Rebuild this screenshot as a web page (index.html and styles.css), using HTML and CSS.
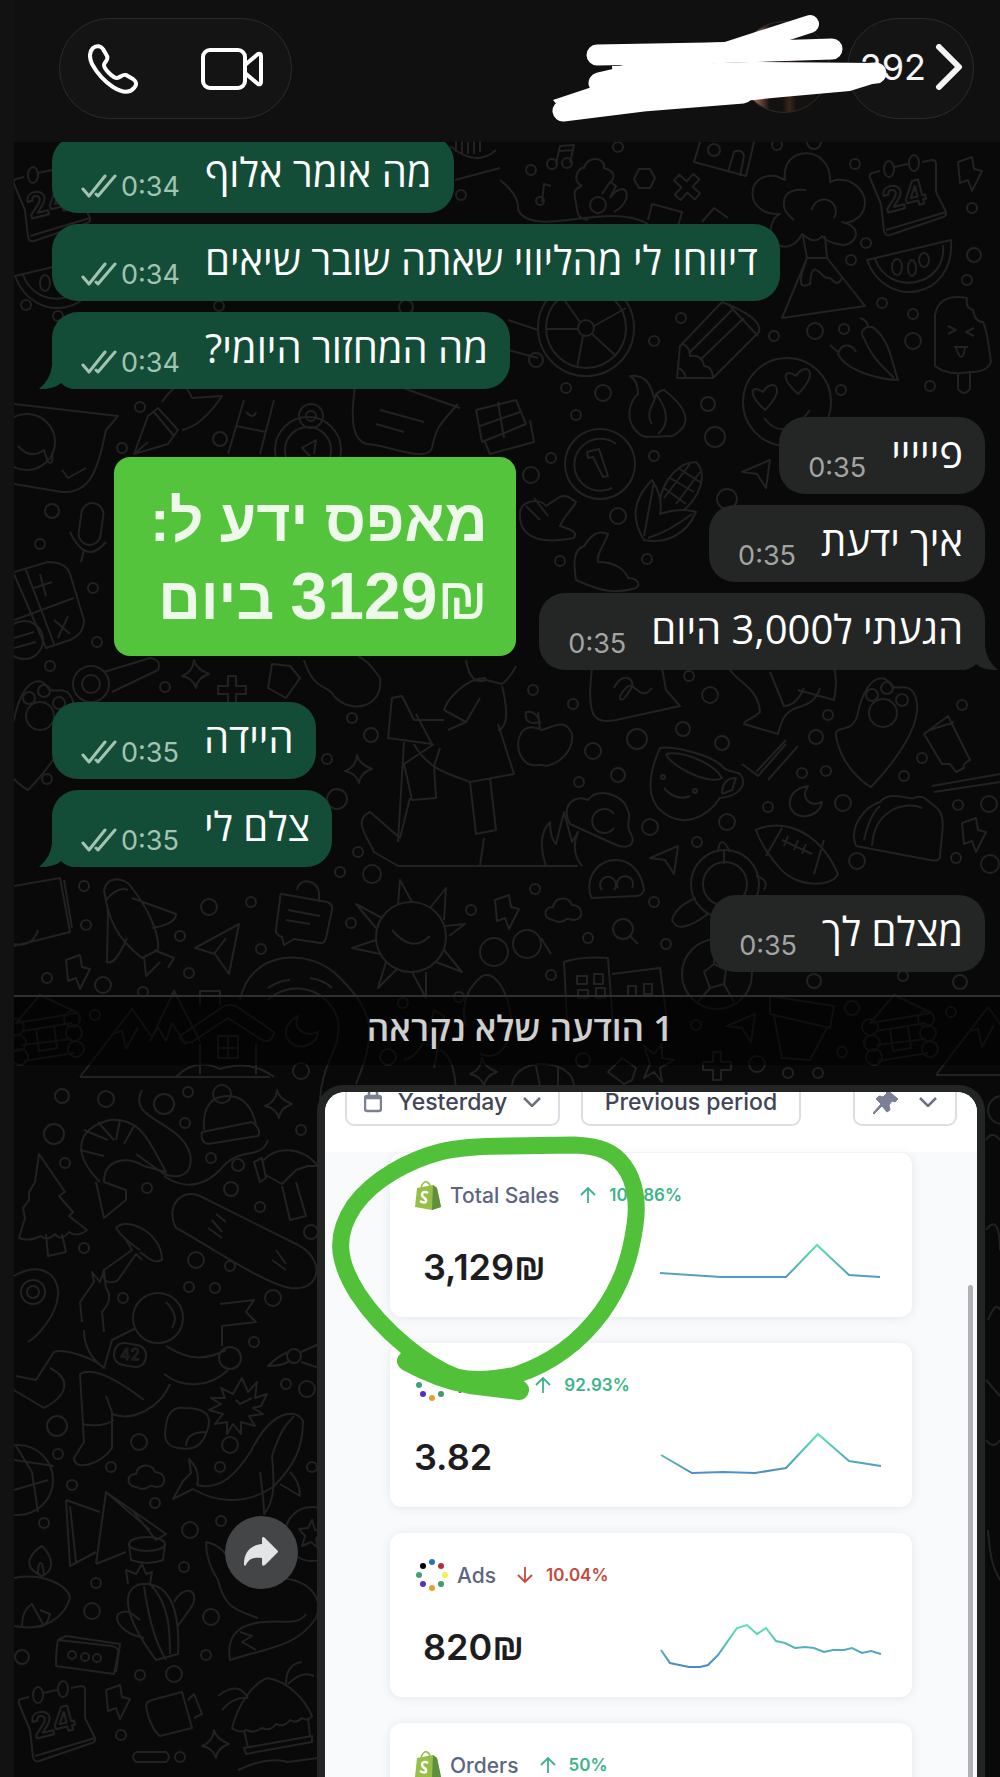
FILE: index.html
```html
<!DOCTYPE html>
<html lang="he" dir="rtl">
<head>
<meta charset="utf-8">
<meta name="viewport" content="width=device-width, initial-scale=1">
<title>צ'אט</title>
<link rel="stylesheet" href="styles.css">
</head>
<body>
<svg class="defs" aria-hidden="true">
  <defs>
    <linearGradient id="line" gradientUnits="userSpaceOnUse" x1="0" y1="4" x2="0" y2="46">
      <stop offset="0" stop-color="#5ce3ab"/><stop offset="1" stop-color="#4f86c6"/>
    </linearGradient>
    <symbol id="ticks" viewBox="0 0 36 24"><path d="M2 15l6 7L24 2M15 20l2 2L34 2" fill="none" stroke="currentColor" stroke-width="3" stroke-linecap="round" stroke-linejoin="round"/></symbol>
    <symbol id="tip" viewBox="0 0 36 30"><path d="M13 0v6Q12 20 0 30q16 0 22-6 6 6 14 6V0z" fill="currentColor"/></symbol>
    <symbol id="bag" viewBox="0 0 28 30">
      <path d="M3 8l16-3 4 3 4 19-9 3L1 27z" fill="#95bf47"/><path d="M19 5l4 3 4 19-9 3z" fill="#5e8e3e"/>
      <path d="M7 8c1-5 4-7 6-6s3 3 3 5" fill="none" stroke="#95bf47" stroke-width="1.500"/>
      <path d="M14 13c-3-2-6-1-6 2 0 3 5 3 4 6 0 2-3 2-6 0" fill="none" stroke="#fff" stroke-width="2.500"/>
    </symbol>
    <symbol id="ring" viewBox="0 0 32 32">
      <circle cx="16" cy="3" r="3" fill="#2c6fb5"/><circle cx="25" cy="7" r="3" fill="#b92b3a"/><circle cx="29" cy="16" r="3" fill="#f4ef5c"/><circle cx="25" cy="25" r="3" fill="#3d9b6c"/>
      <circle cx="16" cy="29" r="3" fill="#e3a035"/><circle cx="7" cy="25" r="3" fill="#5a2fbd"/><circle cx="3" cy="16" r="3" fill="#43a079"/><circle cx="7" cy="7" r="3" fill="#000"/>
    </symbol>
    <symbol id="up" viewBox="0 0 16 18"><path d="M8 17V2M1 9l7-7 7 7" fill="none" stroke="currentColor" stroke-width="1.800"/></symbol>
    <symbol id="down" viewBox="0 0 16 18"><path d="M8 1v15M1 9l7 7 7-7" fill="none" stroke="currentColor" stroke-width="1.800"/></symbol>
    <symbol id="chev" viewBox="0 0 18 10"><path d="M1 1l8 8 8-8" fill="none" stroke="currentColor" stroke-width="2.500"/></symbol>

    <g id="calendar"><path d="M10 11L2 13q-3 1-2 5l11 26M24 7l14-3M52 2l10-2q4 0 4 4v28M66 32l10 20q1 4-3 5L20 75q-5 1-6-4l-3-27M16 70l60-18"/><ellipse cx="19" cy="9" rx="5" ry="8"/><ellipse cx="44" cy="3" rx="5" ry="8"/><text class="num" x="16" y="53" transform="rotate(-14 16 53)">24</text></g>
    <path id="bolt" d="M0 5l14-5 2 12 8 2-10 20-4-11-8 3z"/>
    <path id="spark" d="M12 0q2 9 15 14-12 4-13 14-3-10-14-12Q11 12 12 0z"/>
    <path id="cloud" d="M8 22c-12-2-8-14 0-13C10-2 24-2 27 7c12 0 12 15 2 15-4 0-5-2-7-1-5 4-9 4-14 1z"/>
    <path id="plane" d="M0 12L28 0l-4 28-9-14z"/>
    <path id="cross" d="M10 0h8v10h10v8H18v10h-8V18H0v-8h10z"/>
    <g id="cabin"><path d="M6 28L30 0l38 18-62 10zM12 36l50-8M12 50l50-6M14 66l50-8"/><circle cx="62" cy="24" r="8"/><circle cx="64" cy="38" r="8"/><circle cx="66" cy="54" r="8"/><circle cx="6" cy="32" r="8"/><circle cx="8" cy="48" r="8"/><circle cx="10" cy="62" r="8"/><path d="M26 34l18-3 3 22-18 3z"/></g>
    <g id="peaks"><path d="M0 80L52 12l20 28L94-6l26 50M0 80h190"/><path d="M34 36l8-2 4 18 12-22M70 44l8-14 8 14 6-18 14 22"/></g>
    <g id="melon"><path d="M0 20L84 0c4 60-66 70-84 20zM8 19c14 38 72 28 68-14"/><ellipse cx="30" cy="27" rx="5" ry="8"/><ellipse cx="45" cy="28" rx="4" ry="8"/><ellipse cx="57" cy="20" rx="5" ry="7"/></g>
    <g id="paw"><path d="M22 40C14 60-4 44 2 64c8 32 34 46 34 46s50-50 46-84C78 0 60 16 56 8 48-6 30 0 22 40z"/><circle cx="48" cy="36" r="14"/><circle cx="37" cy="18" r="6"/><circle cx="52" cy="11" r="6"/><circle cx="67" cy="23" r="6"/></g>
  </defs>
</svg>

<main class="app">
  <header class="top">
    <button class="pill back" type="button" aria-label="חזרה">
      <svg width="28" height="46" viewBox="0 0 28 46" aria-hidden="true"><path d="M4 3l20 20L4 43" fill="none" stroke="#f4f4f4" stroke-width="6" stroke-linecap="round" stroke-linejoin="round"/></svg>
      <span class="count">292</span>
    </button>
    <span class="avatar"></span>
    <svg class="scribble" viewBox="540 0 360 130" aria-hidden="true">
      <path d="M612 66L750 62l127 1 5 18-32 10-67 6-50 5-170 10-10-12 60-20z" fill="#fff"/>
      <g fill="none" stroke="#fff" stroke-linecap="round" stroke-linejoin="round"><path stroke-width="21" d="M597 55l110-2 125-4M563 111l80-10 100-8M599 83l60-14M710 84l166-11"/><path stroke-width="18" d="M810 24l-84 27-100 24"/></g>
      <path d="M690 46l90-6v18l-70 4-60 6-30-2z" fill="#fff"/>
    </svg>
    <div class="pill calls">
      <button type="button" aria-label="שיחת וידאו"><svg width="62" height="42" viewBox="0 0 62 42" fill="none" stroke="#fff" stroke-width="4" stroke-linejoin="round" aria-hidden="true"><rect x="2" y="2" width="42" height="38" rx="7"/><path d="M44 17L57 6q3-1 3 2v26q0 3-3 2L44 25"/></svg></button>
      <button type="button" aria-label="שיחה"><svg width="50" height="50" viewBox="0 0 50 50" fill="none" stroke="#fff" stroke-width="4" stroke-linejoin="round" aria-hidden="true"><path d="M5 4c4-3 8-2 10 1l4 7c2 4-3 6-3 9 0 4 9 13 13 13 3 0 5-4 9-3l7 4c4 3 4 6 1 9-5 6-13 4-21-1C16 37 9 29 4 20 1 13 1 8 5 4z"/></svg></button>
    </div>
  </header>

  <section class="chat">
    <svg class="doodles" viewBox="14 142 986 1635" preserveAspectRatio="xMinYMin slice" aria-hidden="true">
      <use href="#calendar" x="14" y="166"/><use href="#calendar" x="870" y="160"/><use href="#calendar" x="19" y="1686"/>
      <use href="#bolt" x="958" y="157"/><use href="#bolt" x="66" y="955"/><use href="#bolt" x="962" y="818"/><use href="#bolt" x="495" y="895"/><use href="#bolt" x="106" y="1685"/>
      <use href="#spark" x="265" y="1090"/><use href="#spark" x="470" y="1058"/><use href="#spark" x="182" y="660"/><use href="#spark" x="345" y="755"/><use href="#spark" x="202" y="1730"/>
      <use href="#cloud" x="545" y="898"/><use href="#cloud" x="128" y="1465"/><use href="#plane" x="650" y="846"/><use href="#plane" x="727" y="1014"/><use href="#plane" x="742" y="460"/>
      <use href="#cross" x="703" y="1052"/><use href="#cross" x="218" y="676"/><use href="#cross" x="-14" y="-14" transform="translate(687 187) rotate(42)"/>
      <use href="#cabin" x="10" y="995"/><use href="#cabin" x="864" y="995"/><use href="#peaks" x="80" y="997"/><use href="#peaks" x="936" y="995"/>
      <use href="#melon" x="867" y="240"/><use href="#melon" x="15" y="256"/><use href="#paw" x="835" y="677"/><use href="#paw" x="-8" y="680"/>
      <!-- tree and volcano -->
      <path d="M785 180C780 144 832 144 830 182 850 172 876 196 860 216 848 226 842 222 842 222 868 228 852 250 838 244 826 242 824 238 822 236 814 246 806 236 802 234 790 258 764 244 772 224 774 216 780 214 780 214 744 216 744 172 776 176zM784 206q-2-18 22-16M794 220q-10-8-10-14M812 210a12 12 0 1 1 22 8"/><path d="M803 236l4 22h20l-2-22M807 258l-25 60 83-12-38-48M806 262q-12 30 4 22c2-30 12-4 18-6 4-2 8 12 14 0"/>
      <!-- music, dome, flower, hexagon, crayon -->
      <path d="M556 164l4-18 14-1-4 18M560 151l13-1M542 202l2-18 7 2"/><circle cx="552" cy="164" r="5"/><circle cx="567" cy="163" r="5"/><circle cx="540" cy="201" r="4"/>
      <path d="M582 186c-12-6-2-20 2-18 4-14 22-10 20 0 14 4 10 12 4 16M582 186c-12 4-6 12-6 18 2 8 0 14 12 16M602 194l8-12 6 4-6 12M610 198c16-22 26 2 4 14"/><circle cx="598" cy="205" r="8"/><path d="M634 179l5-10h11l5 9-5 10h-11zM500 180q20 16 18 30c16 30 90-10 130 14M700 142l-6 20 52 14 8-34M728 172l6-20q8-4 10 4l-4 20"/><circle cx="714" cy="150" r="6"/>
      <path d="M450 146q26 22 46 4M456 142v10M462 142v12M468 142v12M474 142v12M480 142v10M455 180l45-12M648 220l4-16 30 8-4 14M702 222l12-14 14 10"/>
      <!-- wheel -->
      <circle cx="586" cy="328" r="48"/><circle cx="586" cy="328" r="40"/><circle cx="586" cy="328" r="8"/><path d="M594 326l32-18M580 322l-20-28M578 329h-32M583 336l-6 32M592 334l24 22M508 320l30 10M508 350l30 8"/><circle cx="536" cy="360" r="7"/>
      <!-- pencil -->
      <path d="M722 302l-42 44-3 32 36 0 46-46q4-14-37-30zM690 352l42-42M700 360l44-42M682 344q8 2 8 12 12-2 14 10 8 0 9 12M678 368q6 2 8 10M728 304l30 32"/>
      <!-- faces -->
      <circle cx="787" cy="402" r="44"/><path d="M798 394c-20-18-12-26-2-18 8-14 26-6 2 18zM765 410c-20-18-12-26-2-18 8-14 26-6 2 18zM764 418q20 26 46-8"/><circle cx="27" cy="442" r="28"/><path d="M14 404l104 12-12 14c-8 40-16 64-44 62L14 484M62 470l6 8 18-10M18 446q12 14 26 4l4 12q6 4 4-10"/>
      <!-- ice pop, peppers -->
      <path d="M935 366V315q4-22 32-17-2 10 6 12 2 12 10 12 4 8 8 40-4 10-20 10-24 4-36-6zM958 373v16q6 8 12 0v-16M948 326l8 4-8 4M974 328l-8 4 8 4M954 347h14M956 348q6 18 9 0"/><path d="M838 354c10 20 50 26 60 26-8-24-8-38-24-52-8-4-16 4-10 10 8 20 18 28 30 40M838 354c4-14 16-8 18-2M868 328q0-8-8-10M838 352l-8-7"/>
      <!-- fire, coin, corn -->
      <path d="M642 436c-20-14-12-36-4-42 0-12-4-16-8-18 20-2 22 16 24 22 4-8 10-8 10-8 26 20 28 36 8 46-10 0-24 2-30 0zM652 424c-8-12 4-22 4-30 14 18 12 32 2 40"/><circle cx="600" cy="464" r="35"/><path d="M616 444a26 26 0 1 0-4 44M587 452l12-3 9 27-5 1-10-20-5 1z"/>
      <path d="M644 540c-14-22-10-42 8-60 8 12 10 24 8 34 12-4 24-6 36-2-10 24-32 32-52 28zM644 536l10-54M648 538q20-6 44-24M660 500c4-22 20-38 36-38 12 12 4 34-12 48M664 488l22 16M670 478l24 14M678 468l22 14M690 464l-26 34M700 472l-24 32"/>
      <!-- hands -->
      <path d="M520 512c2-12 20-14 26-6l12-8c6-4 10-2 18 4-4 8-12 14-16 24 12 4 18 6 14 12-30 6-56 2-54-26zM526 506l14 14M534 498l14 18M576 580c-2-14-4-30 8-34 8-12 14-16 24-12-4 12-12 20-10 28 20 0 28 10 30 16 8 0 14 6 8 10-20 6-34 4-60-8z"/>
      <path d="M476 410l40-10 10 24-44 18zM484 440l6 14 44-12-4-22M498 402l6 36M480 426l40-14M352 370l108 38M380 410l44 12M376 424l28 8M356 380c-8 50 0 60 10 64 20 0 60 20 66 4 4-18 4-20 26-44"/>
      <!-- pen, ruler, compass -->
      <path d="M134 454l14-38 10-8 20 22-10 14zM134 454l14-12M154 412l20 24M162 402q20-30 30-4l30-2q-20 30-40 34M244 400l-16 54M274 400l-14 54M236 426l30 6M246 412q8 8 10 0"/><circle cx="308" cy="450" r="33"/><circle cx="308" cy="450" r="23"/><circle cx="311" cy="416" r="12"/><circle cx="311" cy="416" r="5"/><path d="M310 456l-8-8 14-8-2 14"/>
      <!-- mic and calculator -->
      <rect x="80" y="503" width="22" height="42" rx="11" transform="rotate(8 91 524)"/><path d="M70 532q16 34 36 10M84 550l-3 12M14 572l34-10q18 0 22 12l14 46q0 14-14 20l-24 8-32-74M26 570l28 74M14 620l60-22M40 574l6 22M34 588l18-6M54 620l16 14M68 616l-10 22"/><circle cx="24" cy="640" r="19"/><path d="M14 638l20-6M14 648l22-6"/>
      <!-- whistle, purse, bottle -->
      <circle cx="91" cy="684" r="18"/><circle cx="91" cy="684" r="9"/><path d="M104 672l46-14q12 2 8 12l-46 22M272 664l-4 24 18 10 14-20-10-12zM304 660c10 32 24 24 30 36 18 20 50 10 46-18-10-14-14-18-22-22"/>
      <!-- gardener -->
      <path d="M466 660q4 26 20 20l16 4q8-6 14-18M486 678c-20 0-38 20-42 32l22 12 14-24M466 722l-18 8M444 720l-30 0-12-24-10 2-4 40 44 6-16-30M502 686q10 40-4 44M498 724l16 50-44 8c-20-8-42-12-56-38M470 782l6 52 20-4-6-52M434 744l-30 20 8 36 24-2-2-32 6-18M410 798l-10 40-30-26c-18 8-2 26 4 40l24 14h180M404 742l-6 100M484 838l-4 28M546 866q-10-30 4-44 0 16 6 22l8-32 8 30 6-10q-8 20 4 34"/>
      <!-- apple, note, dolphin, cup -->
      <path d="M542 730c-20-10-28 10-22 24 8 18 20 8 26 12 12-2 28-14 26-32-6-16-18-8-30-4zM540 728l-2-16M540 722q-16 4-14-10 10-2 14 10zM592 668c-6 50 2 56 24 52l64-14-14-16-4-22M614 688c10-20 24-6 16 2-8 16-16 10-4-2 8-10 14 16 26 0M730 670c10 14 28 18 30 42-8 8-16 8-16 12l34 10c4-16 8-22 18-26 14-4 20-8 24-20M770 672l14 34q12 0 20-18M798 690l36 10q4-20 0-32"/>
      <path d="M660 748q-18 40-2 60c24 24 50 8 62-10 20-2 28-14 20-24-8-4-14-2-18-8-12-12-50-20-62-18zM666 754c20-4 50 12 56 24-12 8-52-12-56-24M722 794l10-4 4-12q-14 0-14 16M664 788q12 14 26 8"/><circle cx="663" cy="777" r="2"/><circle cx="695" cy="791" r="2"/>
      <path d="M742 764l16 12 28-32M756 772l30-32M768 780l30-34M808 786q-20 4-18 20c4 16 30 12 32-4-12 6-22-4-14-16zM924 734l24-18 22 44q-8 4-6 8l-8 4-6-8h-8zM930 730l24-8M932 786l68-12M934 792l66-10"/>
      <!-- cloud sync, football, taco -->
      <path d="M570 824c-10-20 6-30 18-24 10-14 34-4 38 6 8 14-2 16 4 26 8 14-4 18-16 12zM614 814a12 12 0 1 0 0 14M756 830c20-10 60-6 82 44-6 14-44 14-60-8-12-14-18-24-22-36zM782 828l-16 28M824 840l-10 34M782 840l30 14M788 836l-4 10M798 840l-4 10M806 844l-4 10M856 846c-8-20 10-40 24-44 10-12 28-2 34-4 10-4 12 2 18 6 16 10 10 24 8 52q0 6-10 4zM872 846c2-34 30-46 50-38M864 840q6-26 16-34"/>
      <!-- smiling gadgets, turtle, sunglasses, lens -->
      <path d="M590 894c-4-20 10-34 26-34s26 14 28 30q-2 6-8 6l-44 2zM602 890a8 8 0 1 1 12 0M618 888a8 8 0 1 1 14 0"/><circle cx="725" cy="884" r="34"/><circle cx="725" cy="884" r="22"/><path d="M708 914q-30 22-36 6 4-14 24-22M756 876q14 4 8 14M718 852q2-20 12 0M724 850v14"/><circle cx="527" cy="944" r="14"/><circle cx="494" cy="952" r="14"/><circle cx="623" cy="929" r="10"/><path d="M630 936l8 8M541 938l10 16"/>
      <!-- ball and towers -->
      <circle cx="717" cy="974" r="35"/><path d="M704 972l10-8 12 6-2 14-14 4zM714 964v-24M726 970l24-10M724 984l10 18M710 988l-12 14M568 1040l-4-78q18-6 44-4l6 80M612 974l48-6 8 60M577 976h10v8h-10zM594 974h9v10h-9zM578 990h10v8h-10zM596 988h9v10h-9zM628 986h8v10h-8zM644 984h8v10h-8z"/>
      <!-- rocket, bag, sun -->
      <path d="M104 890c4-16 22-12 28-2 14 18 28 44 26 62l-16 8c-26-20-34-40-38-68zM106 900q12-14 22-10M132 898l44 16q0 10-24 14M108 910l-1 52q8 4 20-24M144 956l2 20 14-14M154 950l20 8-6 10M14 886l46-8 10 54-56 14M64 880l8 48M14 944q18 4 24-14"/>
      <path d="M282 894l45 8q6 2 5 8l-6 28q-2 6-6 5l-26-4-10 6-2-8q-7-2-6-8l4-30q0-6 2-5zM297 890c2-14 22-10 22 4v8M288 910l32 6M286 920l24 4M195 948l44-24-10 50-14-20zM214 954l12-16"/>
      <circle cx="411" cy="937" r="35"/><path d="M392 930q20 24 38 6M398 904l2-24 12 22M430 908l16-20-2 32M445 926l20-2-16 12M444 950l18 22-26-10M412 972l14 26v-26M386 962l-8 26 20-20M376 940l-24 8 28 6M382 918l-26-14 20 24"/>
      <!-- house, location loop -->
      <path d="M180 1036l44-30q6-2 12 0l38 26q-2 12-12 8l-34-22-36 24q-12 2-12-6zM200 1044v30M256 1044v30M176 1077q20-20 44-8 30-10 54 8M218 1036h20v22h-20zM228 1036v22M218 1048h20M200 1005v-14h20v14M240 1000c10-50 70-54 100-22 36 36 36 56 16 106M268 1000c20-20 60-14 70 20 4 30-16 40-18 80M268 988q12-8 22-8M310 978q14 2 22 10"/><path d="M298 1016q-14 8-12 20c8 18 32 10 32-4-14 6-26-4-20-16z"/><path d="M770 996l64 10-4 22-60-14zM774 1016l8 42 28 2 18-34M466 1026q-8-30 16-50c20-8 34 40 28 60q-10 26-30 18M404 1060q20-4 30-50l10 6-10 52M440 1050q14 6 16 40"/>
      <path d="M512 1085c4-30 60-26 62 0M536 1066l4 20M558 1066v20M608 1072l14-14 14 10-4 12-8 4zM650 1064l-6-18 10 8 8-10v14l12 2-14 8 2 14-8-10-10 6z"/>
      <!-- hat, shrimp, tree -->
      <path d="M204 1130c-2-24 8-34 24-34s24 12 28 28M202 1132l50-10q10 8 6 14l-50 8q-8-2-6-12z"/><circle cx="222" cy="1094" r="9"/><path d="M100 1182c-30-30-22-54 10-62 26-2 36 16 44 30l12 22-22-6c-16-10-40-8-40 16l22 8v10l-22 18-8-36M84 1130l24 10M80 1150l24 6M98 1122l16 18M120 1120l-4 20M134 1126l-10 18M142 1090c-16 30 38 30 48 64 4 20-10 26-26 20l-28-20M164 1176c26 18 46 4 56-6 20-26 40-8 48-30"/>
      <path d="M39 1154l26 38-6 4 14 16-4 4 18 14q-10 8-18 2-8 10-14 2-8 8-14 2-12 6-22 2l6-20-2-10 6-8v-8l6-10zM46 1234l2 22 18-4-4-18"/>
      <!-- hammer, mushroom, board -->
      <path d="M254 1162l8-4 4 20-6 4zM264 1160c12-14 38-14 54 6h-10l-12 4-14 14-18-10M282 1186l8 34 16-4-10-34M116 1228c10-12 46 4 46 32-8 4-14-2-22-8M116 1228q6 10 24 22M126 1240l6 10-28 20c-4 14 10 14 14 10l18-26 6 6"/><path d="M176 1228c-12-24 8-40 24-32l96 48c30 14 26 48-6 44-30-6-90-48-114-60z"/><path d="M212 1220l10 12M208 1228l14 10M216 1214l10 8M276 1250l10 14M272 1260l14 10"/>
      <circle cx="33" cy="1292" r="12"/><circle cx="33" cy="1292" r="6"/><path d="M14 1276c28-16 46 0 44 20-2 20-20 40-30 46M82 1322l-2-20 14-20-2-10 8 10 4-12 2 18q8 10-4 24l2 20"/><circle cx="158" cy="1318" r="25"/><path d="M166 1302q14 14 6 26M220 1304l34-4-8 12 10 10-34 4v20"/>
      <!-- runner -->
      <path d="M84 1330c0 14 6 28 20 38l8-28 24-12M104 1368c-10-10-40-20-50-16l-18 28-20-4M50 1368c20 10 20 26-6 40l-30-18M80 1374c10-6 30 0 64 26M80 1374l4 68-10 16c0 14 28 6 38-10v-36l-6-16M82 1424q20 4 32-4M112 1414c20 8 48-6 58-30M166 1346c10 6 30 20 60 4M164 1374c20 16 48 12 64-4"/><rect x="114" y="1344" width="32" height="22" rx="10" transform="rotate(10 130 1355)"/><circle cx="230" cy="1358" r="11"/><text x="120" y="1360" class="small">42</text>
      <path d="M242 1378l6 14 9-10-2 16 12-4-6 12-8 2 10 6-14 2 6 10-14-4v12l-8-10-6 10v-12l-12 2 8-10-14-4 12-6-10-6h14l-4-10 12 6zM236 1400l4 4 12-6M166 1426q2-20 18-18c20 0 28 6 24 20-6 22-18 22-30 20-14-2-14-12-12-22zM186 1446q0-14 20-14"/>
      <circle cx="294" cy="1356" r="7"/><path d="M288 1352q-10 4-20 14 16 0 22-6M301 1352l18-8M301 1362l18 6"/>
      <!-- whale, samosa, lamp, cactus -->
      <path d="M197 1485c24 6 40-12 54-34 20-40 44-44 52-30 0 26-8 44-30 66-30 20-60 14-80 2l-20 10 10-18 8-8-2-14q12 12 8 26M260 1472q4 30 4 42c12-14 10-36 8-58 10-30 14-30 22-40M280 1484l20 12q0-14-10-24"/>
      <circle cx="18" cy="1480" r="35"/><path d="M14 1460l40 6M32 1472l-16-26M32 1472l6 40M14 1490l34-10M66 1500l34 12M66 1500l4 66 26-14M96 1564l10-72 60 42-10 6-24-30M106 1492l44 38M70 1506l6 56M96 1564l30-12"/><ellipse cx="147" cy="1544" rx="18" ry="7"/><path d="M129 1544l2 16q16 6 32 0l2-16M14 1578c30-6 54 8 56 20-6 20-26 34-56 28M42 1576c-24-10-8-26 0-30 14 14 10 26 0 30zM38 1574q0-14 4-10l2 10M22 1626q0-16 10-22l12 22M40 1610l10 4q-4 16-14 12"/>
      <path d="M156 1660c-30-40-38-72-14-76 30-2 38 30 36 70zM144 1586c4 30 10 54 22 74M150 1584c20 20 20 50 20 70M128 1584l-2-14 10 4 6-10 4 10 6-2-2 12M174 1602c12-20 26-10 18 4l-14 20M144 1638c-20-4-30-16-26-24 10-6 14 0 22 6"/>
      <path d="M58 1640l54 6q8 2 6 8l-4 20-58-8q0-16 2-26zM58 1640l8-4 54 8-4 28"/><circle cx="72" cy="1655" r="4"/><circle cx="85" cy="1657" r="4"/><circle cx="97" cy="1658" r="4"/>
      <path d="M152 1700l30-8 10 36-32 8q-10-8-14-30 0-4 6-6zM188 1700l6-6 8 20-8 4M136 1752h30q6 5 0 10h-30q-6-5 0-10"/>
      <!-- fox and beach hut -->
      <path d="M206 1542q20 4 28 28M206 1542q0 20 12 38c6 26 16 30 40 38M280 1578c30 2 44 20 36 40-20 30-50 30-86 42-4-26 10-36 34-38 20-2 34 4 42-8M240 1632l12 4-10 6 14 8"/><circle cx="312" cy="1534" r="27"/><path d="M312 1520l3 10 9 2-8 6 2 10-7-6-9 4 3-10-6-7 9-1z"/>
      <path d="M232 1728c6-24 22-46 36-50 20 4 36 20 44 38q-4 6-10 2-6 6-12 2-6 8-14 4-6 8-14 4-8 6-16 2-6 4-14-2zM244 1748l68-12v6l-66 12zM244 1730l4 18M308 1718l2 18M218 1696q20-16 30 2M222 1710q12-14 26-12M286 1684q0-20 16-22M288 1684q14-14 26-8M238 1770q30-14 50-8l30-4"/>
      <!-- right edge -->
      <circle cx="1002" cy="1110" r="14"/><path d="M986 1140q6-10 14 0M986 1230c10-14 14 0 14 20M988 1320q8-20 12-10M986 1380l14 16M986 1440q8 10 14 0M988 1530c2 30 6 40 12 50"/>
      <g class="dots">
        <circle cx="618" cy="147" r="5"/><circle cx="777" cy="145" r="5"/><circle cx="814" cy="142" r="7"/><circle cx="531" cy="170" r="5"/><circle cx="855" cy="164" r="5"/><circle cx="461" cy="195" r="5"/><circle cx="972" cy="208" r="5"/><circle cx="866" cy="243" r="5"/><circle cx="851" cy="260" r="5"/><circle cx="974" cy="255" r="7"/><circle cx="967" cy="280" r="5"/><circle cx="882" cy="303" r="5"/><circle cx="913" cy="314" r="5"/><circle cx="815" cy="331" r="8"/><circle cx="844" cy="329" r="5"/><circle cx="913" cy="341" r="8"/><circle cx="774" cy="336" r="5"/><circle cx="681" cy="318" r="5"/><circle cx="654" cy="341" r="5"/><circle cx="566" cy="388" r="5"/><circle cx="603" cy="393" r="8"/><circle cx="841" cy="390" r="5"/><circle cx="930" cy="386" r="5"/><circle cx="26" cy="305" r="5"/><circle cx="58" cy="316" r="5"/><circle cx="219" cy="306" r="5"/><circle cx="406" cy="307" r="7"/>
        <circle cx="140" cy="407" r="5"/><circle cx="122" cy="448" r="5"/><circle cx="220" cy="439" r="7"/><circle cx="576" cy="415" r="5"/><circle cx="708" cy="404" r="7"/><circle cx="715" cy="437" r="10"/><circle cx="551" cy="458" r="5"/><circle cx="531" cy="475" r="8"/><circle cx="654" cy="456" r="5"/><circle cx="727" cy="499" r="10"/><circle cx="618" cy="516" r="8"/><circle cx="560" cy="561" r="5"/><circle cx="647" cy="559" r="5"/><circle cx="52" cy="511" r="7"/><circle cx="40" cy="544" r="5"/><circle cx="93" cy="588" r="5"/><circle cx="97" cy="642" r="5"/><circle cx="50" cy="666" r="5"/><circle cx="165" cy="687" r="5"/>
        <circle cx="533" cy="690" r="5"/><circle cx="573" cy="704" r="5"/><circle cx="689" cy="676" r="5"/><circle cx="710" cy="695" r="8"/><circle cx="828" cy="715" r="5"/><circle cx="816" cy="737" r="7"/><circle cx="683" cy="729" r="7"/><circle cx="722" cy="743" r="7"/><circle cx="637" cy="739" r="10"/><circle cx="593" cy="751" r="8"/><circle cx="618" cy="775" r="7"/><circle cx="579" cy="782" r="5"/><circle cx="802" cy="773" r="5"/><circle cx="826" cy="771" r="5"/><circle cx="922" cy="758" r="5"/><circle cx="904" cy="776" r="5"/><circle cx="843" cy="803" r="8"/><circle cx="768" cy="807" r="5"/><circle cx="727" cy="822" r="8"/><circle cx="650" cy="827" r="8"/><circle cx="697" cy="842" r="5"/><circle cx="857" cy="861" r="8"/><circle cx="958" cy="805" r="5"/><circle cx="989" cy="804" r="8"/><circle cx="956" cy="858" r="5"/><circle cx="990" cy="864" r="9"/><circle cx="962" cy="705" r="5"/>
        <circle cx="352" cy="718" r="5"/><circle cx="371" cy="735" r="7"/><circle cx="327" cy="759" r="5"/><circle cx="337" cy="799" r="10"/><circle cx="358" cy="852" r="5"/><circle cx="340" cy="872" r="5"/><circle cx="372" cy="874" r="9"/><circle cx="47" cy="779" r="5"/><circle cx="84" cy="886" r="5"/><circle cx="86" cy="925" r="5"/><circle cx="209" cy="907" r="8"/><circle cx="251" cy="902" r="5"/><circle cx="180" cy="936" r="5"/><circle cx="261" cy="949" r="5"/><circle cx="189" cy="973" r="5"/><circle cx="47" cy="978" r="5"/><circle cx="103" cy="985" r="8"/><circle cx="143" cy="992" r="5"/><circle cx="351" cy="923" r="5"/><circle cx="471" cy="910" r="5"/><circle cx="535" cy="889" r="5"/><circle cx="654" cy="902" r="5"/><circle cx="588" cy="938" r="5"/><circle cx="666" cy="944" r="5"/><circle cx="551" cy="975" r="5"/><circle cx="814" cy="981" r="7"/><circle cx="903" cy="976" r="5"/><circle cx="960" cy="982" r="7"/><circle cx="852" cy="1008" r="7"/><circle cx="951" cy="1012" r="5"/><circle cx="696" cy="1025" r="5"/><circle cx="842" cy="1052" r="5"/><circle cx="757" cy="1064" r="8"/><circle cx="788" cy="1073" r="5"/><circle cx="818" cy="1073" r="5"/><circle cx="583" cy="1060" r="7"/>
        <circle cx="95" cy="1015" r="5"/><circle cx="301" cy="1071" r="8"/><circle cx="388" cy="1057" r="8"/><circle cx="403" cy="1003" r="5"/><circle cx="459" cy="997" r="5"/><circle cx="62" cy="1096" r="7"/><circle cx="106" cy="1099" r="8"/><circle cx="164" cy="1104" r="10"/><circle cx="188" cy="1092" r="5"/><circle cx="185" cy="1123" r="5"/><circle cx="54" cy="1134" r="10"/><circle cx="65" cy="1163" r="5"/><circle cx="301" cy="1130" r="5"/><circle cx="211" cy="1158" r="5"/><circle cx="238" cy="1165" r="6"/><circle cx="231" cy="1189" r="7"/><circle cx="147" cy="1188" r="5"/><circle cx="260" cy="1207" r="5"/><circle cx="311" cy="1232" r="7"/><circle cx="84" cy="1248" r="5"/><circle cx="196" cy="1260" r="8"/><circle cx="230" cy="1266" r="5"/><circle cx="189" cy="1287" r="5"/><circle cx="215" cy="1288" r="5"/><circle cx="273" cy="1298" r="8"/><circle cx="123" cy="1298" r="5"/>
        <circle cx="57" cy="1426" r="10"/><circle cx="139" cy="1442" r="8"/><circle cx="230" cy="1445" r="8"/><circle cx="58" cy="1454" r="5"/><circle cx="111" cy="1467" r="5"/><circle cx="220" cy="1467" r="5"/><circle cx="72" cy="1485" r="5"/><circle cx="286" cy="1384" r="5"/><circle cx="307" cy="1389" r="8"/><circle cx="312" cy="1467" r="5"/><circle cx="254" cy="1342" r="5"/><circle cx="44" cy="1523" r="5"/><circle cx="155" cy="1503" r="5"/><circle cx="190" cy="1530" r="8"/><circle cx="221" cy="1521" r="5"/><circle cx="96" cy="1583" r="5"/><circle cx="184" cy="1567" r="5"/><circle cx="92" cy="1611" r="8"/><circle cx="211" cy="1617" r="8"/><circle cx="206" cy="1655" r="5"/><circle cx="140" cy="1675" r="5"/><circle cx="174" cy="1674" r="8"/><circle cx="121" cy="1735" r="5"/><circle cx="180" cy="1757" r="5"/><circle cx="22" cy="1657" r="7"/>
      </g>
    </svg>

    <div class="group out first">
      <p class="msg"><span class="text">מה אומר אלוף</span><time>0:34</time><svg class="ticks"><use href="#ticks"/></svg></p>
      <p class="msg"><span class="text">דיווחו לי מהליווי שאתה שובר שיאים</span><time>0:34</time><svg class="ticks"><use href="#ticks"/></svg></p>
      <p class="msg"><span class="text">מה המחזור היומי?</span><time>0:34</time><svg class="ticks"><use href="#ticks"/></svg><svg class="tip"><use href="#tip"/></svg></p>
    </div>

    <div class="split">
      <div class="group in">
        <p class="msg"><span class="text">פייייי</span><time>0:35</time></p>
        <p class="msg"><span class="text">איך ידעת</span><time>0:35</time></p>
        <p class="msg"><span class="text">הגעתי ל3,000 היום</span><time>0:35</time><svg class="tip"><use href="#tip"/></svg></p>
      </div>
      <p class="sticker">מאפס ידע ל:<br><span class="sum">3129</span><span class="shekel">₪</span> ביום</p>
    </div>

    <div class="group out second">
      <p class="msg"><span class="text">היידה</span><time>0:35</time><svg class="ticks"><use href="#ticks"/></svg></p>
      <p class="msg"><span class="text">צלם לי</span><time>0:35</time><svg class="ticks"><use href="#ticks"/></svg><svg class="tip"><use href="#tip"/></svg></p>
    </div>

    <div class="group in">
      <p class="msg"><span class="text">מצלם לך</span><time>0:35</time></p>
    </div>

    <p class="unread">1 הודעה שלא נקראה</p>

    <div class="photo-row">
      <div class="photo">
        <div class="report" dir="ltr">
          <div class="toolbar">
            <button class="tool date" type="button"><svg width="18" height="22" viewBox="0 0 18 22" fill="none" stroke="#7c8192" stroke-width="2.500" aria-hidden="true"><rect x="1" y="5" width="16" height="15" rx="2"/><path d="M1 7h16M5 0v5M13 0v5"/></svg><span>Yesterday</span><svg class="chev"><use href="#chev"/></svg></button>
            <button class="tool period" type="button">Previous period</button>
            <button class="tool pin" type="button" aria-label="Pin"><svg width="26" height="28" viewBox="0 0 26 28" aria-hidden="true"><path d="M13 1l12 10-3 3-3-1-3 4 1 5-3 2-5-6-8 8-1-1 8-9-5-5 3-3 4 1 4-4-2-2z" fill="#7a8096" stroke="#7a8096" stroke-width="1" stroke-linejoin="round"/></svg><svg class="chev"><use href="#chev"/></svg></button>
          </div>
          <div class="cards">
            <article class="card">
              <h2 class="head"><svg class="bag"><use href="#bag"/></svg><span>Total Sales</span><span class="pct up"><svg class="arrow"><use href="#up"/></svg>108.86%</span></h2>
              <div class="body"><span class="value money">3,129<span class="nis">₪</span></span><svg class="spark" viewBox="0 0 222 56"><path d="M1 32l61 4h65l31-32 32 30 31 2"/></svg></div>
            </article>
            <article class="card">
              <h2 class="head"><svg class="ring"><use href="#ring"/></svg><span>ROAS</span><span class="pct up"><svg class="arrow"><use href="#up"/></svg>92.93%</span></h2>
              <div class="body"><span class="value">3.82</span><svg class="spark" viewBox="0 0 222 56"><path d="M2 24l31 18 31-1 32 1 31-5 32-34 31 27 32 5"/></svg></div>
            </article>
            <article class="card">
              <h2 class="head"><svg class="ring"><use href="#ring"/></svg><span>Ads</span><span class="pct down"><svg class="arrow"><use href="#down"/></svg>10.04%</span></h2>
              <div class="body"><span class="value money">820<span class="nis">₪</span></span><svg class="spark" viewBox="0 0 222 56"><path d="M2 29l9 13 19 4h11l8-2 10-10 19-27 10-3 10 9 9-6 10 13 9 2 10 5 10-1 9 1 10 4 9-2h11l8-2 10 5 9-2 10 3"/></svg></div>
            </article>
            <article class="card">
              <h2 class="head"><svg class="bag"><use href="#bag"/></svg><span>Orders</span><span class="pct up"><svg class="arrow"><use href="#up"/></svg>50%</span></h2>
            </article>
          </div>
          <span class="scroll"></span>
          <svg class="circle" viewBox="325 1092 652 320" fill="none" stroke="#50c138" stroke-linecap="round" stroke-linejoin="round" aria-hidden="true">
            <path stroke-width="17" d="M508 1146L574 1145C600 1146 614 1152 624 1166C636 1182 638 1205 635 1225C630 1260 621 1285 602 1312C580 1342 552 1363 516 1375Q480 1383 456 1377C425 1365 383 1332 358 1294C335 1258 336 1233 354 1206C374 1178 410 1160 440 1152C460 1147 485 1146 508 1146z"/>
            <path stroke-width="20" d="M407 1361Q440 1379 470 1384L519 1390"/>
          </svg>
        </div>
      </div>
      <button class="share" type="button" aria-label="העברה"><svg width="36" height="32" viewBox="0 0 36 32" aria-hidden="true"><path d="M19 2q1-2 3 0l12 12q2 2 0 3L22 29q-3 2-3-1v-6C10 21 6 23 3 29q-2 2-2-1C1 16 8 9 19 8z" fill="#e3e4e5"/></svg></button>
    </div>
  </section>
</main>
</body>
</html>
```
FILE: styles.css
```css
* { box-sizing: border-box; }

body {
  margin: 0;
  background: #121212;
  font-family: "Inter", "Open Sans", "Noto Sans", sans-serif;
}

button {
  border: 0;
  padding: 0;
  background: none;
  color: inherit;
  font: inherit;
}

svg { display: block; }
.defs { position: absolute; width: 0; height: 0; }

.app {
  display: flex;
  flex-direction: column;
  height: 100vh;
  overflow: hidden;
  padding-left: 14px;
  background: #121212;
}

/* header */
.top {
  position: relative;
  flex: none;
  display: flex;
  justify-content: space-between;
  height: 142px;
  padding: 18px 26px 0 45px;
  background: #101010;
}

.pill {
  display: flex;
  align-items: center;
  height: 101px;
  border: 1px solid #2b2b2b;
  border-radius: 51px;
  background: #141414;
}

.back {
  justify-content: flex-start;
  gap: 9px;
  width: 127px;
  padding: 0 10px 3px 0;
  color: #f4f4f4;
  font-size: 36px;
}

.calls {
  justify-content: space-between;
  width: 233px;
  padding: 0 28px;
}

.avatar {
  position: absolute;
  top: 21px;
  right: 170px;
  width: 92px;
  height: 92px;
  border: 1px solid #2b2b2b;
  border-radius: 50%;
  background: linear-gradient(90deg, #1a1210 0%, #a87055 16%, #141111 34%, #141111 48%, #3a261d 56%, #141111 64%);
}

.scribble {
  position: absolute;
  top: 0;
  right: 100px;
  width: 360px;
  height: 130px;
}

/* conversation */
.chat {
  position: relative;
  flex: 1;
  min-height: 0;
  overflow: hidden;
  padding: 0 15px 0 38px;
  background: #090909;
}

.doodles {
  position: absolute;
  inset: 0;
  width: 100%;
  height: 100%;
  fill: none;
  stroke: #222;
  stroke-width: 2;
  stroke-linejoin: round;
  direction: ltr;
}

.num { font: 700 34px "Inter", sans-serif; }
.small { font: 400 16px "Inter", sans-serif; stroke-width: 1px; }

.group {
  position: relative;
  display: flex;
  flex-direction: column;
  gap: 11px;
}

.out { align-items: flex-end; --bubble: #144d37; --meta: #a1c4b3; }
.in { align-items: flex-start; --bubble: #232625; --meta: #a3a5a5; }
.first { margin-top: -6px; }
.second { margin: 32px 0 28px; }

.msg {
  position: relative;
  display: flex;
  align-items: flex-start;
  height: 77px;
  margin: 0;
  padding: 0 22px 0 29px;
  border-radius: 26px;
  background: var(--bubble);
  color: #fff;
}

.text {
  margin-left: 25px;
  font: 400 40px/72px "Open Sans", "Noto Sans", sans-serif;
  white-space: nowrap;
}

time {
  color: var(--meta);
  font-size: 27px;
  line-height: 102px;
}

.ticks {
  width: 36px;
  height: 24px;
  margin: 38px 4px 0 0;
  color: var(--meta);
}

.tip {
  position: absolute;
  bottom: 0;
  left: -13px;
  width: 36px;
  height: 30px;
  color: var(--bubble);
}

.in .tip { right: -13px; left: auto; transform: scaleX(-1); }

.split {
  position: relative;
  display: flex;
  justify-content: space-between;
  align-items: flex-start;
  margin-top: 28px;
}

.sticker {
  margin: 40px 0 0 62px;
  padding: 25px 28px 18px 36px;
  border-radius: 16px;
  background: #53c43b;
  color: #eef8eb;
  font: 700 59px/78px "Liberation Sans", sans-serif;
}

.sum { font-size: 66px; line-height: 60px; }
.shekel { font-weight: 400; }

.unread {
  position: relative;
  height: 70px;
  margin: 23px -15px 0 -38px;
  padding-left: 26px;
  border-top: 2px solid #303030;
  background: rgba(0, 0, 0, .55);
  color: #cfcfcf;
  font: 600 35px/62px "Open Sans", sans-serif;
  text-align: center;
}

/* shared picture */
.photo-row {
  position: relative;
  display: flex;
  align-items: center;
  gap: 19px;
  margin-top: 20px;
}

.photo {
  width: 71.6%;
  padding: 7px 8px;
  border-radius: 26px;
  background: #222524;
}

.report {
  position: relative;
  overflow: hidden;
  border-radius: 20px;
  background: #f8fafc;
}

.toolbar {
  display: flex;
  gap: 21px;
  height: 60px;
  padding: 0 20px;
  background: #fff;
}

.tool {
  display: flex;
  align-items: center;
  justify-content: center;
  height: 54px;
  margin-top: -20px;
  padding-top: 6px;
  border: 2px solid #dcdee4;
  border-radius: 9px;
  background: #fff;
  color: #414555;
  font-size: 23px;
  font-weight: 500;
  line-height: 20px;
}

.date { width: 215px; gap: 16px; }
.period { width: 220px; }
.pin { width: 104px; gap: 20px; margin-left: auto; }
.chev { width: 18px; height: 10px; color: #6d7180; }

.cards {
  display: flex;
  flex-direction: column;
  gap: 26px;
  padding: 1px 65px 125px;
}

.card {
  height: 164px;
  padding: 26px 31px 20px 24px;
  border-radius: 12px;
  background: #fff;
  box-shadow: 0 1px 10px rgba(60, 70, 90, .1);
}

.head {
  display: flex;
  align-items: center;
  height: 32px;
  margin: 0;
  gap: 8px;
  color: #5c6680;
  font-size: 21px;
  font-weight: 500;
}

.bag { width: 28px; height: 30px; }
.ring { width: 32px; height: 32px; margin: 0 1px 0 2px; }
.arrow { width: 16px; height: 18px; }

.pct {
  display: flex;
  align-items: center;
  gap: 13px;
  margin-left: 13px;
  font-size: 17px;
  font-weight: 600;
}

.up { color: #3db389; }
.down { color: #c24a3c; }

.body {
  display: flex;
  align-items: center;
  justify-content: space-between;
  height: 56px;
  margin-top: 30px;
}

.value {
  margin-bottom: 4px;
  color: #1d1d1f;
  font-size: 36px;
  font-weight: 600;
  line-height: 44px;
}

.money { padding-left: 9px; }
.nis { font-family: "Liberation Sans", sans-serif; }

.spark {
  width: 222px;
  height: 56px;
  fill: none;
  stroke: url(#line);
  stroke-width: 2;
  overflow: visible;
}

.scroll {
  position: absolute;
  top: 193px;
  right: 4px;
  bottom: 0;
  width: 5px;
  border-radius: 3px;
  background: #b1b0b7;
}

.circle {
  position: absolute;
  top: 0;
  left: 0;
  width: 652px;
  height: 320px;
}

.share {
  display: flex;
  align-items: center;
  justify-content: center;
  width: 73px;
  height: 73px;
  border-radius: 50%;
  background: #434546;
}
```
